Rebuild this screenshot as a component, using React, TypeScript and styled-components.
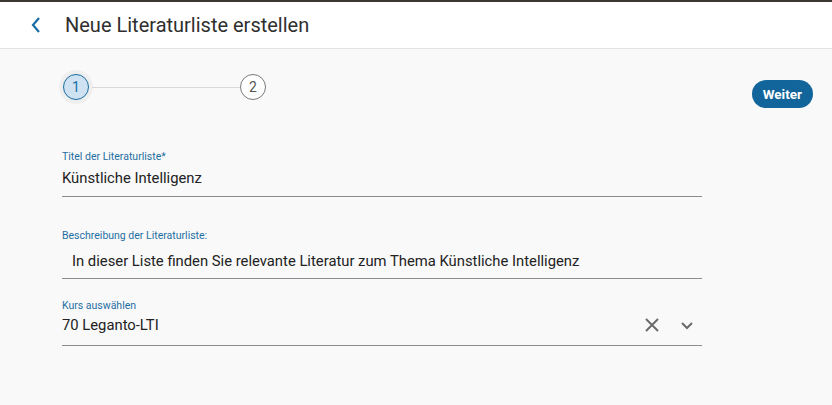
import styled, { createGlobalStyle } from "styled-components";

const GlobalStyle = createGlobalStyle`
    html, body {
        margin: 0;
        padding: 0;
        background: #f9f9f9;
        font-family: Roboto, "Open Sans", sans-serif;
        color: #333;
    }
    * { box-sizing: border-box; }
`;

type StepProps = { active?: boolean };

const App = () => {
    return (
        <>
            <GlobalStyle />
            <Page>
                <Header>
                    <BackButton aria-label="Zurück">
                        <svg width="12" height="20" viewBox="0 0 12 20">
                            <path d="M9 3 L3 10 L9 17" fill="none" stroke="#1b6ea5" strokeWidth="2.2" />
                        </svg>
                    </BackButton>
                    <Title>Neue Literaturliste erstellen</Title>
                </Header>
                <Body>
                    <TopRow>
                        <Stepper>
                            <StepHalo>
                                <Step active>1</Step>
                            </StepHalo>
                            <StepLine />
                            <Step>2</Step>
                        </Stepper>
                        <PrimaryButton>Weiter</PrimaryButton>
                    </TopRow>
                    <Form>
                        <Field space={0} pad={8}>
                            <Label gap={4}>Titel der Literaturliste*</Label>
                            <Value>Künstliche Intelligenz</Value>
                        </Field>
                        <Field space={32} pad={7}>
                            <Label gap={8}>Beschreibung der Literaturliste:</Label>
                            <Value indent>In dieser Liste finden Sie relevante Literatur zum Thema Künstliche Intelligenz</Value>
                        </Field>
                        <Field space={20} pad={10}>
                            <Label gap={2}>Kurs auswählen</Label>
                            <SelectRow>
                                <Value>70 Leganto-LTI</Value>
                                <Icons>
                                    <IconButton aria-label="Löschen">
                                        <svg width="16" height="16" viewBox="0 0 16 16">
                                            <path d="M2 2 L14 14 M14 2 L2 14" stroke="#6b6b6b" strokeWidth="2" />
                                        </svg>
                                    </IconButton>
                                    <IconButton aria-label="Öffnen">
                                        <svg width="14" height="10" viewBox="0 0 14 10">
                                            <path d="M2 3 L7 8 L12 3" fill="none" stroke="#6b6b6b" strokeWidth="2" />
                                        </svg>
                                    </IconButton>
                                </Icons>
                            </SelectRow>
                        </Field>
                    </Form>
                </Body>
            </Page>
        </>
    );
};

const Page = styled.div`
    width: 832px;
    min-height: 405px;
    border-top: 2px solid #3b3733;
    background: #f9f9f9;
`;

const Header = styled.div`
    display: flex;
    align-items: center;
    height: 47px;
    padding-left: 30px;
    background: #fff;
    border-bottom: 1px solid #e3e3e3;
`;

const BackButton = styled.button`
    display: flex;
    align-items: center;
    border: 0;
    background: none;
    padding: 0;
    width: 35px;
    cursor: pointer;
`;

const Title = styled.h1`
    margin: 0;
    font-size: 20px;
    font-weight: 400;
    color: #2f2f2f;
`;

const Body = styled.div`
    padding: 17px 19px 0 62px;
`;

const TopRow = styled.div`
    display: flex;
    align-items: center;
    justify-content: space-between;
    height: 42px;
`;

const Stepper = styled.div`
    display: flex;
    align-items: center;
`;

const StepHalo = styled.div`
    display: flex;
    align-items: center;
    justify-content: center;
    width: 28px;
    height: 28px;
    margin-right: 2px;
    border-radius: 50%;
    background: #ececec;
    box-shadow: 0 0 0 3px #efefef;
`;

const Step = styled.div<StepProps>`
    display: flex;
    align-items: center;
    justify-content: center;
    width: 26px;
    height: 26px;
    border-radius: 50%;
    font-size: 14px;
    border: 1px solid ${(p) => (p.active ? "#1b6ea5" : "#7a7a7a")};
    background: ${(p) => (p.active ? "#cfe2f1" : "#fff")};
    color: ${(p) => (p.active ? "#1b6ea5" : "#555")};
`;

const StepLine = styled.div`
    width: 148px;
    height: 1px;
    background: #d8d8d8;
`;

const PrimaryButton = styled.button`
    height: 28px;
    padding: 0 11px;
    margin-top: 14px;
    border: 0;
    border-radius: 14px;
    background: #12659b;
    color: #fff;
    font-family: Roboto, sans-serif;
    font-size: 13.5px;
    font-weight: 700;
    cursor: pointer;
`;

const Form = styled.div`
    display: flex;
    flex-direction: column;
    width: 640px;
    margin-top: 42px;
`;

const Field = styled.div<{ space: number; pad: number }>`
    display: flex;
    flex-direction: column;
    margin-top: ${(p) => p.space}px;
    padding-bottom: ${(p) => p.pad}px;
    border-bottom: 1px solid #8c8c8c;
`;

const Label = styled.label<{ gap: number }>`
    font-size: 10.5px;
    line-height: 14px;
    color: #1f6fa3;
    margin-bottom: ${(p) => p.gap}px;
`;

const Value = styled.div<{ indent?: boolean }>`
    font-size: 14.8px;
    line-height: 20px;
    color: #222;
    padding-left: ${(p) => (p.indent ? "10px" : "0")};
`;

const SelectRow = styled.div`
    display: flex;
    align-items: center;
    justify-content: space-between;
    height: 20px;
`;

const Icons = styled.div`
    display: flex;
    align-items: center;
    gap: 20px;
    padding-right: 8px;
`;

const IconButton = styled.button`
    display: flex;
    border: 0;
    background: none;
    padding: 0;
    cursor: pointer;
`;

export default App;
